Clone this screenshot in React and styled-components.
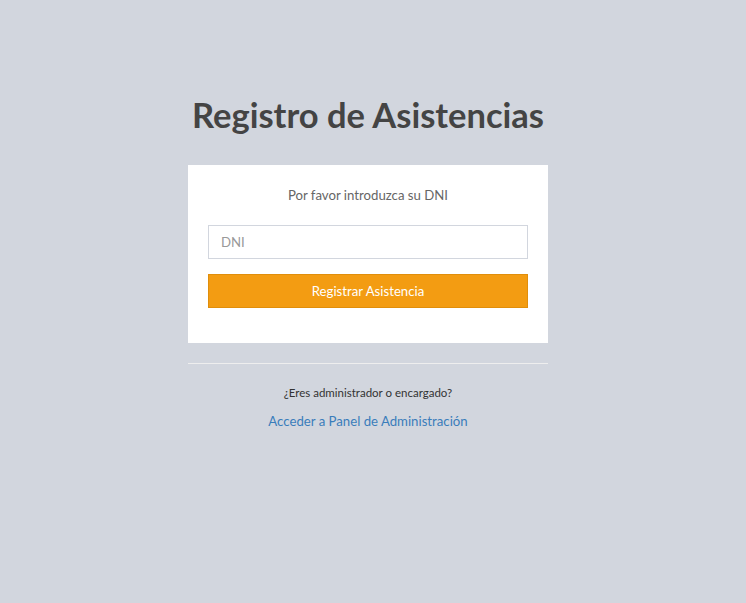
import React from "react";
import styled, { createGlobalStyle } from "styled-components";

const Global = createGlobalStyle`
  html, body { margin: 0; padding: 0; }
  body {
    background: #d2d6de;
    font-family: "Source Sans Pro", Lato, "Liberation Sans", sans-serif;
    font-size: 13.2px;
    line-height: 20px;
    color: #333;
    min-height: 603px;
  }
`;

const Page = styled.div`
  display: flex;
  justify-content: center;
  padding: 90px 10px 0 0;
`;

const LoginBox = styled.div`
  width: 360px;
`;

const Title = styled.h1`
  margin: 0 0 25px;
  font-size: 34.5px;
  line-height: 50px;
  font-weight: 700;
  text-align: center;
  color: #444;
`;

const Card = styled.div`
  background: #fff;
  padding: 20px;
  color: #666;
`;

const Msg = styled.p`
  margin: 0;
  padding: 0 20px 20px;
  text-align: center;
  color: #666;
`;

const Input = styled.input`
  display: block;
  box-sizing: border-box;
  width: 100%;
  height: 34px;
  margin: 0 0 15px;
  padding: 6px 12px;
  border: 1px solid #d2d6de;
  font-family: inherit;
  font-size: 13.2px;
  color: #555;
  outline: none;
  &::placeholder { color: #999; }
`;

const Button = styled.button`
  display: block;
  box-sizing: border-box;
  width: 100%;
  height: 34px;
  margin: 0 0 15px;
  border: 1px solid #e08e0b;
  background: #f39c12;
  color: #fff;
  font-family: inherit;
  font-size: 13.2px;
  cursor: pointer;
`;

const Rule = styled.hr`
  margin: 20px 0;
  border: 0;
  border-top: 1px solid #eee;
`;

const Footer = styled.div`
  text-align: center;
`;

const Small = styled.p`
  margin: 0 0 10px;
  font-size: 11.5px;
  line-height: 17px;
  color: #333;
`;

const Link = styled.a`
  display: block;
  line-height: 20px;
  color: #3a7dbb;
  text-decoration: none;
`;

export default function App() {
  return (
    <>
      <Global />
      <Page>
        <LoginBox>
          <Title>Registro de Asistencias</Title>
          <Card>
            <Msg>Por favor introduzca su DNI</Msg>
            <Input placeholder="DNI" />
            <Button>Registrar Asistencia</Button>
          </Card>
          <Rule />
          <Footer>
            <Small>¿Eres administrador o encargado?</Small>
            <Link href="#">Acceder a Panel de Administración</Link>
          </Footer>
        </LoginBox>
      </Page>
    </>
  );
}
